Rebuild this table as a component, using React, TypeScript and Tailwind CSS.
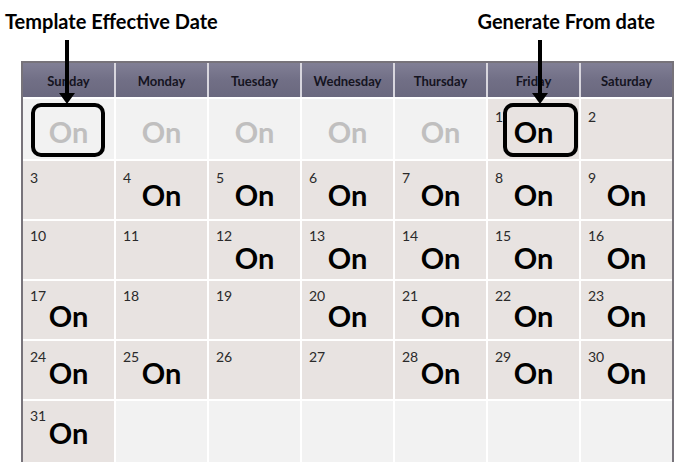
import React from "react";

type Cell = { n?: number; on?: "on" | "ghost"; light?: boolean };

const days = ["Sunday", "Monday", "Tuesday", "Wednesday", "Thursday", "Friday", "Saturday"];

const rows: { h: string; numPt: string; onMt: string; cells: Cell[] }[] = [
  {
    h: "h-[60px]",
    numPt: "pt-[11px]",
    onMt: "mt-[-6px]",
    cells: [
      { on: "ghost", light: true },
      { on: "ghost", light: true },
      { on: "ghost", light: true },
      { on: "ghost", light: true },
      { on: "ghost", light: true },
      { n: 1, on: "on" },
      { n: 2 },
    ],
  },
  {
    h: "h-[58px]",
    numPt: "pt-[10px]",
    onMt: "mt-[-4px]",
    cells: [
      { n: 3 },
      { n: 4, on: "on" },
      { n: 5, on: "on" },
      { n: 6, on: "on" },
      { n: 7, on: "on" },
      { n: 8, on: "on" },
      { n: 9, on: "on" },
    ],
  },
  {
    h: "h-[58px]",
    numPt: "pt-[8px]",
    onMt: "mt-[1px]",
    cells: [
      { n: 10 },
      { n: 11 },
      { n: 12, on: "on" },
      { n: 13, on: "on" },
      { n: 14, on: "on" },
      { n: 15, on: "on" },
      { n: 16, on: "on" },
    ],
  },
  {
    h: "h-[58px]",
    numPt: "pt-[8px]",
    onMt: "mt-[-1px]",
    cells: [
      { n: 17, on: "on" },
      { n: 18 },
      { n: 19 },
      { n: 20, on: "on" },
      { n: 21, on: "on" },
      { n: 22, on: "on" },
      { n: 23, on: "on" },
    ],
  },
  {
    h: "h-[58px]",
    numPt: "pt-[9px]",
    onMt: "mt-[-5px]",
    cells: [
      { n: 24, on: "on" },
      { n: 25, on: "on" },
      { n: 26 },
      { n: 27 },
      { n: 28, on: "on" },
      { n: 29, on: "on" },
      { n: 30, on: "on" },
    ],
  },
  {
    h: "h-[61px]",
    numPt: "pt-[8px]",
    onMt: "mt-[-4px]",
    cells: [
      { n: 31, on: "on" },
      { light: true },
      { light: true },
      { light: true },
      { light: true },
      { light: true },
      { light: true },
    ],
  },
];

function Arrow({ left }: { left: string }) {
  return (
    <svg
      className={`absolute top-[40px] ${left}`}
      width="16"
      height="64"
      viewBox="0 0 16 64"
    >
      <rect x="6" y="0" width="4" height="56" fill="#000" />
      <polygon points="0,53 16,53 8,64" fill="#000" />
    </svg>
  );
}

export default function App() {
  return (
    <div
      className="relative w-[675px] h-[465px] overflow-hidden bg-white"
      style={{ fontFamily: "Lato, 'Liberation Sans', sans-serif" }}
    >
      {/* titles */}
      <div className="flex h-[61px] pt-[11px]">
        <div className="ml-[5px] text-[20px] leading-[20px] font-bold text-black">
          Template Effective Date
        </div>
        <div className="ml-auto mr-[20px] text-[20px] leading-[20px] font-bold text-black">
          Generate From date
        </div>
      </div>

      {/* calendar */}
      <div className="ml-[21px] w-[653px] border-x-2 border-t-2 border-[#77737a] bg-white">
        <div className="grid grid-cols-7 gap-x-[2px] bg-[#d8d6de]">
          {days.map((d) => (
            <div
              key={d}
              className="h-[34px] flex items-center justify-center pt-[3px] bg-gradient-to-b from-[#817f95] via-[#716f86] to-[#6a687e] text-[13px] font-bold text-[#15141f]"
            >
              {d}
            </div>
          ))}
        </div>
        <div className="flex flex-col gap-y-[2px] pt-[2px] bg-white">
          {rows.map((r, ri) => (
            <div key={ri} className="grid grid-cols-7 gap-x-[2px]">
              {r.cells.map((c, ci) => (
                <div
                  key={ci}
                  className={`${r.h} flex flex-col px-[7px] ${r.numPt} ${
                    c.light ? "bg-[#f2f2f2]" : "bg-[#e8e3e1]"
                  }`}
                >
                  <div className="h-[13px] text-[14px] leading-[13px] text-[#2a2a2a]">
                    {c.n ?? ""}
                  </div>
                  {c.on && (
                    <div
                      className={`${r.onMt} text-center text-[29px] leading-[29px] font-bold ${
                        c.on === "ghost" ? "text-[#c0bfbf]" : "text-black"
                      }`}
                    >
                      On
                    </div>
                  )}
                </div>
              ))}
            </div>
          ))}
        </div>
      </div>

      {/* overlays */}
      <Arrow left="left-[59px]" />
      <Arrow left="left-[532px]" />
      <div className="absolute left-[31px] top-[103px] w-[74px] h-[54px] border-[4px] border-black rounded-[10px]" />
      <div className="absolute left-[503px] top-[103px] w-[75px] h-[54px] border-[4px] border-black rounded-[10px]" />
    </div>
  );
}
